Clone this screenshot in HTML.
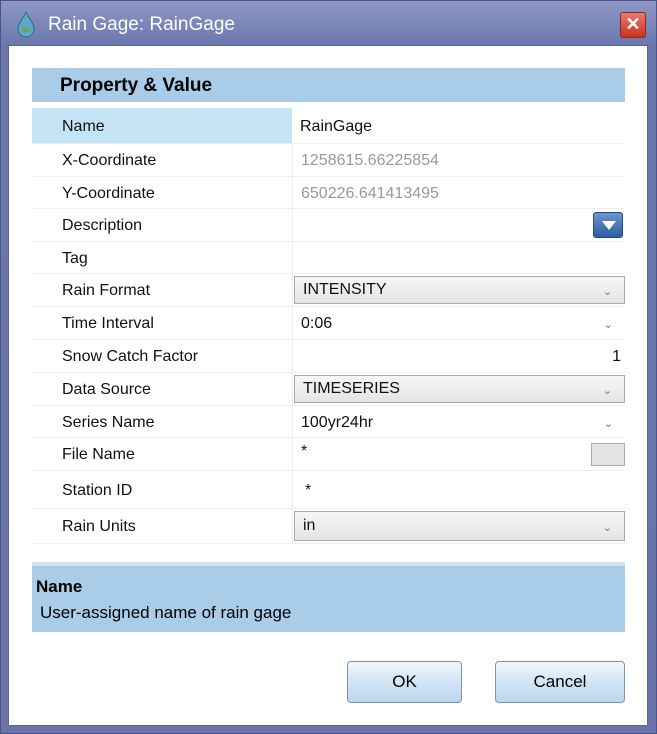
<!DOCTYPE html>
<html><head><meta charset="utf-8"><style>
*{box-sizing:border-box;margin:0;padding:0}
body{width:657px;height:734px;background:#fff;font-family:"Liberation Sans",sans-serif;position:relative;overflow:hidden}
.frame{position:absolute;left:0;top:0;width:657px;height:734px;background:linear-gradient(#8d98c6,#6b76ad 45px,#6a74aa);border:1px solid #4b5488}
.client{position:absolute;left:8px;top:45px;width:640px;height:681px;background:#fff;border:1px solid #5a6399}
.title{position:absolute;left:48px;top:14px;color:#fff;font-size:19px}
.close{position:absolute;left:620px;top:12px;width:26px;height:26px;background:linear-gradient(#e87b6a,#c8321f);border:1px solid #8a2a20;border-radius:3px;color:#fff;font-weight:bold;font-size:18px;text-align:center;line-height:23px}
.hdr{position:absolute;left:32px;top:68px;width:593px;height:34px;background:#a9cde9;font-weight:bold;font-size:19px;padding:7px 0 0 28px}
.row{position:absolute;left:32px;width:593px;border-bottom:1px solid #ececec;font-size:16px;color:#111}
.row .k{position:absolute;left:0;top:0;bottom:0;width:260px;padding-left:30px;padding-top:2px;display:flex;align-items:center}
.row .v{position:absolute;left:260px;top:0;bottom:0;right:0;border-left:1px solid #ececec;padding-left:8px;padding-top:2px;display:flex;align-items:center}
.gray{color:#999}
.combo{position:absolute;left:1px;top:2px;right:0;bottom:2px;background:linear-gradient(#f6f6f6,#e4e4e4);border:1px solid #aaa;padding-left:8px;display:flex;align-items:center}
.chev{position:absolute;right:12px;top:50%;margin-top:-5px;font-size:11px;color:#777}
.desc{position:absolute;left:32px;top:562px;width:593px;height:70px;background:#a9cde9;border-top:4px solid #cfe2f2}
.btn{position:absolute;top:661px;height:42px;border:1px solid #7a93b5;border-radius:4px;background:linear-gradient(#f2f7fc,#d3e5f5 50%,#bcd6ee);font-size:17px;text-align:center;line-height:40px}
</style></head><body>
<div class="frame"></div>
<svg style="position:absolute;left:14px;top:10px" width="24" height="28"><path d="M12 2 C8 10 4 14 4 19 a8 8 0 0 0 16 0 C20 14 16 10 12 2Z" fill="#5fa9c8" stroke="#2f6a8c"/><path d="M7 20 q4 -4 9 0 q-3 5 -9 0Z" fill="#6da84a"/></svg>
<div class="title">Rain Gage: RainGage</div>
<div class="close">✕</div>
<div class="client"></div>
<div class="hdr">Property &amp; Value</div>

<div class="row" style="top:108px;height:36px"><div class="k" style="background:#c4e3f5">Name</div><div class="v" style="border-left:none">RainGage</div></div>
<div class="row" style="top:144px;height:33px"><div class="k">X-Coordinate</div><div class="v gray">1258615.66225854</div></div>
<div class="row" style="top:177px;height:32px"><div class="k">Y-Coordinate</div><div class="v gray">650226.641413495</div></div>
<div class="row" style="top:209px;height:33px"><div class="k">Description</div><div class="v"><div style="position:absolute;right:2px;top:3px;width:30px;height:26px;background:linear-gradient(#6c93cc,#2f5ea6);border-radius:3px;border:1px solid #244a85"><div style="position:absolute;left:8px;top:8px;border-left:7px solid transparent;border-right:7px solid transparent;border-top:9px solid #fff"></div></div></div></div>
<div class="row" style="top:242px;height:32px"><div class="k">Tag</div><div class="v"></div></div>
<div class="row" style="top:274px;height:33px"><div class="k">Rain Format</div><div class="v"><div class="combo">INTENSITY<span class="chev">⌄</span></div></div></div>
<div class="row" style="top:307px;height:33px"><div class="k">Time Interval</div><div class="v">0:06<span class="chev">⌄</span></div></div>
<div class="row" style="top:340px;height:33px"><div class="k">Snow Catch Factor</div><div class="v" style="justify-content:flex-end;padding-right:4px">1</div></div>
<div class="row" style="top:373px;height:33px"><div class="k">Data Source</div><div class="v"><div class="combo">TIMESERIES<span class="chev">⌄</span></div></div></div>
<div class="row" style="top:406px;height:32px"><div class="k">Series Name</div><div class="v">100yr24hr<span class="chev">⌄</span></div></div>
<div class="row" style="top:438px;height:33px"><div class="k">File Name</div><div class="v" style="align-items:flex-start;padding-top:5px">*<div style="position:absolute;right:0;top:5px;width:34px;height:23px;background:#e3e3e3;border:1px solid #aaa"></div></div></div>
<div class="row" style="top:471px;height:38px"><div class="k">Station ID</div><div class="v" style="padding-left:12px">*</div></div>
<div class="row" style="top:509px;height:35px"><div class="k">Rain Units</div><div class="v"><div class="combo">in<span class="chev">⌄</span></div></div></div>

<div class="desc"><div style="font-weight:bold;font-size:17px;padding:11px 0 0 4px">Name</div><div style="font-size:17px;padding:6px 0 0 8px">User-assigned name of rain gage</div></div>
<div class="btn" style="left:347px;width:115px">OK</div>
<div class="btn" style="left:495px;width:130px">Cancel</div>
</body></html>
